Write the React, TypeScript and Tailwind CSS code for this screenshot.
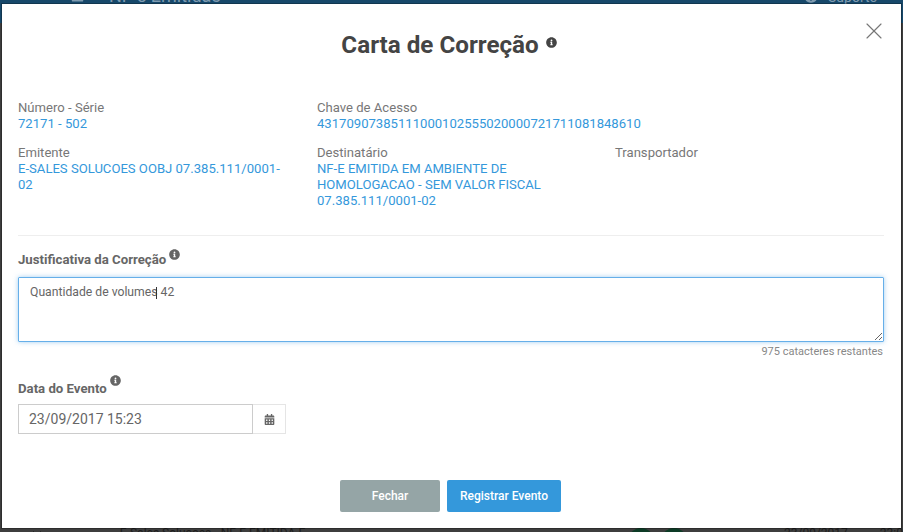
import { FaInfoCircle, FaCalendarAlt, FaBars, FaQuestionCircle } from 'react-icons/fa';
import { X } from 'lucide-react';

function Info({ label, children }: { label: string; children?: React.ReactNode }) {
  return (
    <div className="text-[13.1px] leading-4">
      <div className="text-[#777]">{label}</div>
      <div className="text-[#3498db]">{children}</div>
    </div>
  );
}

export default function App() {
  return (
    <div className="relative flex h-[532px] w-[903px] flex-col overflow-hidden bg-[#3d3d3d] font-['Roboto',sans-serif]">
      {/* page behind the modal */}
      <div className="flex h-[23px] shrink-0 items-start justify-between bg-[#17486a] pl-[71px] pr-[26px] text-[#7f9bb0]">
        <div className="flex items-start gap-[25px]">
          <FaBars size={13} className="-mt-[10px]" />
          <span className="-mt-[12px] text-[18px] leading-[16px]">NF-e Emitidas</span>
        </div>
        <div className="flex items-start gap-[10px] text-[14px] leading-[14px]">
          <FaQuestionCircle size={14} className="-mt-[11px]" />
          <span className="-mt-[10px]">Suporte</span>
        </div>
      </div>
      <div className="flex-1" />
      <div className="flex h-[4px] shrink-0 text-[12px] leading-[16px] text-[#1c1c1c]">
        <div className="w-[120px] pl-[30px]">
          <X size={14} strokeWidth={1.5} />
        </div>
        <div className="-mt-[3px] w-[101px] whitespace-nowrap">E-Sales Solucoes</div>
        <div className="-mt-[3px] w-[408px] whitespace-nowrap">NF-E EMITIDA E</div>
        <div className="h-[26px] w-[26px] rounded-full bg-[#0d3b26]" />
        <div className="ml-[7px] h-[26px] w-[26px] rounded-full bg-[#0d3b26]" />
        <div className="-mt-[3px] ml-[97px] w-[96px] whitespace-nowrap">23/09/2017</div>
        <div className="-mt-[3px] whitespace-nowrap">23:0</div>
      </div>

      {/* modal */}
      <div className="absolute left-[2px] top-[4px] h-[524px] w-[899px] bg-white shadow-[0_0_0_1px_rgba(0,0,0,0.25)]">
        <button className="absolute right-[13px] top-[13px] text-[#777]">
          <X size={28} strokeWidth={1} />
        </button>

        <div className="flex h-[96px] items-start justify-center pr-[5px] pt-[25px]">
          <h1 className="text-[24.2px] font-bold leading-[32px] text-[#444]">Carta de Correção</h1>
          <FaInfoCircle size={11} className="ml-[7px] mt-[8px] text-[#444]" />
        </div>

        <div className="pl-[16px] pr-[17px]">
          <div className="grid grid-cols-[299px_298px_1fr] gap-y-[13px] pb-[26px]">
            <Info label="Número - Série">72171 - 502</Info>
            <div className="col-span-2">
              <Info label="Chave de Acesso">43170907385111000102555020000721711081848610</Info>
            </div>
            <div className="pr-[26px]">
              <Info label="Emitente">E-SALES SOLUCOES OOBJ 07.385.111/0001-02</Info>
            </div>
            <div className="pr-[24px]">
              <Info label="Destinatário">NF-E EMITIDA EM AMBIENTE DE HOMOLOGACAO - SEM VALOR FISCAL 07.385.111/0001-02</Info>
            </div>
            <Info label="Transportador" />
          </div>

          <div className="border-t border-[#eee] pt-[13px]">
            <label className="flex items-start text-[13.2px] font-bold leading-[20px] text-[#666]">
              <span className="mt-[1px]">Justificativa da Correção</span>
              <FaInfoCircle size={11} className="ml-[3px]" />
            </label>
            <div className="relative mt-[7px]">
              <textarea
                readOnly
                value="Quantidade de volumes 42"
                className="block h-[65px] w-full rounded-[1px] border border-[#66afe9] px-[11px] py-[6px] text-[12.2px] leading-[17px] text-[#666] shadow-[0_0_5px_rgba(102,175,233,0.6)] outline-none"
              />
              {/* caret */}
              <div className="absolute left-[138px] top-[10px] h-[12px] w-px bg-[#333]" />
            </div>
            <div className="mt-[3px] pr-[1px] text-right text-[11px] leading-[14px] text-[#888]">975 catacteres restantes</div>
          </div>

          <div className="mt-[19px]">
            <label className="flex items-start text-[13.2px] font-bold leading-[20px] text-[#666]">
              <span className="mt-[1px]">Data do Evento</span>
              <FaInfoCircle size={11} className="ml-[3px] -mt-[3px]" />
            </label>
            <div className="mt-[5px] flex h-[30px] w-[268px]">
              <div className="flex w-[235px] items-center border border-[#ccc] pl-[10px] text-[14px] text-[#666]">23/09/2017 15:23</div>
              <div className="flex flex-1 items-center justify-center border border-l-0 border-[#e5e5e5] text-[#666]">
                <FaCalendarAlt size={11} />
              </div>
            </div>
          </div>

          <div className="mt-[46px] flex justify-center gap-[7px] pr-[1px]">
            <button className="h-[32px] w-[100px] rounded-[2px] bg-[#95a5a6] text-[12px] font-medium text-white">Fechar</button>
            <button className="h-[32px] w-[114px] rounded-[2px] bg-[#3498db] text-[12px] font-medium text-white">Registrar Evento</button>
          </div>
        </div>
      </div>
    </div>
  );
}
